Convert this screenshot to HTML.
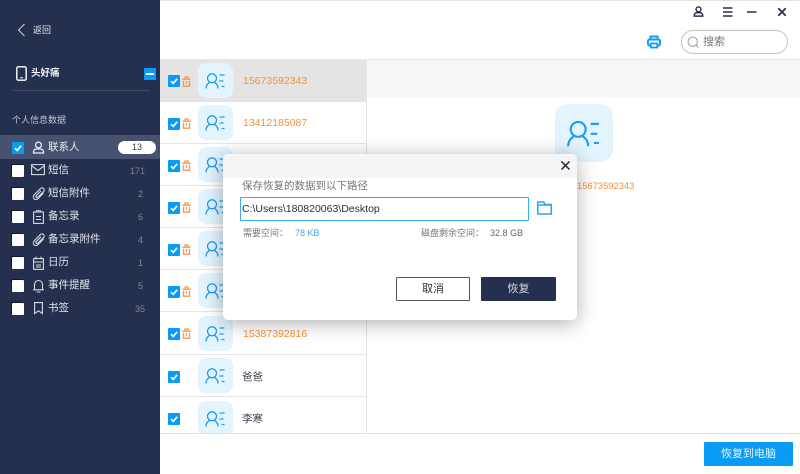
<!DOCTYPE html>
<html><head><meta charset="utf-8">
<style>
*{box-sizing:border-box}
html,body{margin:0;padding:0}
body{width:800px;height:474px;position:relative;overflow:hidden;background:#fff;font-family:"Liberation Sans","Noto Sans CJK SC",sans-serif}
.a{position:absolute}
.t{position:absolute;white-space:nowrap;line-height:14px}
#side{left:0;top:0;width:160px;height:474px;background:#25304e;color:#d8dce4}
.cb{position:absolute;width:12px;height:12px;background:#fff;border-radius:1px;box-shadow:-1px -1px 0 #10182c}
.ck{position:absolute;width:12px;height:12px;background:#0a9bf5;border-radius:1px}
.ck svg{display:block}
.row{position:absolute;left:160px;width:206px;height:42px;border-bottom:1px solid #e6e6e6;background:#fff}
.tile{position:absolute;left:38px;top:3px;width:35px;height:35px;background:#e3f4ff;border-radius:8px}
.num{position:absolute;left:83px;top:14px;font-size:10.5px;line-height:14px;color:#f0953a}
.nm{position:absolute;left:82px;top:15px;font-size:10.5px;line-height:14px;color:#3c4150}
.cnt{position:absolute;right:17px;font-size:9px;line-height:12px;color:#7d8598}
.lab{position:absolute;left:48px;font-size:10.5px;line-height:14px;color:#e2e5eb}
svg{position:absolute;overflow:visible}
</style></head>
<body>
<svg width="0" height="0" style="position:absolute"><defs>
<symbol id="p" viewBox="0 0 35 35"><g fill="none" stroke="#1b9df0" stroke-width="1.300"><circle cx="14" cy="15.300" r="4.500"/><path d="M8 25.500c0-3.500 1.800-5 3.500-6.200M20 25.500c0-3.500-1.800-5-3.500-6.200"/><path d="M21.500 12h5M21.500 18h4M23.500 23.500h3"/></g></symbol>
<symbol id="c" viewBox="0 0 12 12"><rect width="12" height="12" rx="1" fill="#0a9bf5"/><path d="M3 6.200l2.200 2.200L9.200 3.800" fill="none" stroke="#fff" stroke-width="1.700"/></symbol>
<symbol id="b" viewBox="0 0 9 11"><path d="M.3 3.200h8.400M3 3V1h3v2M1.500 4.800v5.400h6V4.800M4.500 5v2.800" fill="none" stroke="#f59a4a" stroke-width="1.300"/></symbol>
<symbol id="clip" viewBox="0 0 14 14"><path d="M11.500 6.500L6.500 11.800c-1.500 1.500-3.500 1.500-4.500.5S1 9.500 2.500 8L8.300 2.200c1-1 2.500-1 3.300-.2s.8 2.300-.2 3.300L6 10.500c-.6.600-1.400.6-1.800.2s-.4-1.200.2-1.800L9 4.300" fill="none" stroke="#d5d9e2" stroke-width="1.100"/></symbol>
</defs></svg>

<div class="a" style="left:160px;top:0;width:640px;height:1px;background:#e4e4e4"></div>
<div class="a" style="left:160px;top:59px;width:640px;height:1px;background:#e6e6e6"></div>

<!-- top bar -->
<svg style="left:693px;top:6px" width="11" height="11" viewBox="0 0 13 13"><g fill="none" stroke="#27314f" stroke-width="1.700"><circle cx="6.500" cy="4" r="2.900"/><path d="M1.500 12V11c0-1.800 1.500-3 2.500-3h5c1 0 2.500 1.200 2.500 3v1z"/></g></svg>
<svg style="left:723px;top:7px" width="10" height="10"><path d="M0 1h9.500M0 5h9.500M0 9h9.500" stroke="#27314f" stroke-width="1.500"/></svg>
<svg style="left:747px;top:11px" width="10" height="2"><path d="M0 1h9.500" stroke="#27314f" stroke-width="1.500"/></svg>
<svg style="left:778px;top:8px" width="8" height="8"><path d="M.3.300l7.400 7.400M7.700.300l-7.400 7.400" stroke="#27314f" stroke-width="1.800"/></svg>
<svg style="left:647px;top:35px" width="14" height="14" viewBox="0 0 14 14"><path d="M3.500 4.500V1.500h7v3" fill="none" stroke="#0f9ff8" stroke-width="2"/><rect x="1" y="4.500" width="12" height="6" rx="1.500" fill="#fff" stroke="#0f9ff8" stroke-width="2"/><rect x="3.700" y="8.500" width="6.600" height="4" fill="#fff" stroke="#0f9ff8" stroke-width="1.800"/></svg>
<div class="a" style="left:681px;top:30px;width:107px;height:24px;border:1px solid #c4c4c4;border-radius:12px;background:#fff"></div>
<svg style="left:687px;top:36px" width="13" height="13"><circle cx="5.700" cy="5.700" r="4.700" fill="none" stroke="#9a9a9a" stroke-width="1"/><path d="M9 9l2.500 2.500" stroke="#9a9a9a"/></svg>
<div class="t" style="left:703px;top:35px;font-size:11px;color:#777">搜索</div>

<!-- list rows -->
<div class="row" style="top:60px;background:#e4e4e4;border:0"><div class="tile"></div><svg style="left:38px;top:3px" width="35" height="35"><use href="#p"/></svg><svg style="left:8px;top:15px" width="12" height="12"><use href="#c"/></svg><svg style="left:22px;top:16px" width="9" height="11"><use href="#b"/></svg><div class="num">15673592343</div></div>
<div class="row" style="top:102px"><div class="tile"></div><svg style="left:38px;top:3px" width="35" height="35"><use href="#p"/></svg><svg style="left:8px;top:16px" width="12" height="12"><use href="#c"/></svg><svg style="left:22px;top:16px" width="9" height="11"><use href="#b"/></svg><div class="num">13412185087</div></div>
<div class="row" style="top:144px"><div class="tile"></div><svg style="left:38px;top:3px" width="35" height="35"><use href="#p"/></svg><svg style="left:8px;top:16px" width="12" height="12"><use href="#c"/></svg><svg style="left:22px;top:16px" width="9" height="11"><use href="#b"/></svg></div>
<div class="row" style="top:186px"><div class="tile"></div><svg style="left:38px;top:3px" width="35" height="35"><use href="#p"/></svg><svg style="left:8px;top:16px" width="12" height="12"><use href="#c"/></svg><svg style="left:22px;top:16px" width="9" height="11"><use href="#b"/></svg></div>
<div class="row" style="top:228px"><div class="tile"></div><svg style="left:38px;top:3px" width="35" height="35"><use href="#p"/></svg><svg style="left:8px;top:16px" width="12" height="12"><use href="#c"/></svg><svg style="left:22px;top:16px" width="9" height="11"><use href="#b"/></svg></div>
<div class="row" style="top:270px"><div class="tile"></div><svg style="left:38px;top:3px" width="35" height="35"><use href="#p"/></svg><svg style="left:8px;top:16px" width="12" height="12"><use href="#c"/></svg><svg style="left:22px;top:16px" width="9" height="11"><use href="#b"/></svg></div>
<div class="row" style="top:313px"><div class="tile"></div><svg style="left:38px;top:3px" width="35" height="35"><use href="#p"/></svg><svg style="left:8px;top:15px" width="12" height="12"><use href="#c"/></svg><svg style="left:22px;top:15px" width="9" height="11"><use href="#b"/></svg><div class="num">15387392816</div></div>
<div class="row" style="top:355px"><div class="tile"></div><svg style="left:38px;top:3px" width="35" height="35"><use href="#p"/></svg><svg style="left:8px;top:16px" width="12" height="12"><use href="#c"/></svg><div class="nm">爸爸</div></div>
<div class="row" style="top:397px;height:36px;overflow:hidden;border:0"><div class="tile" style="top:4px"></div><svg style="left:38px;top:4px" width="35" height="35"><use href="#p"/></svg><svg style="left:8px;top:16px" width="12" height="12"><use href="#c"/></svg><div class="nm">李寒</div></div>

<!-- right pane -->
<div class="a" style="left:366px;top:60px;width:1px;height:373px;background:#e6e6e6"></div>
<div class="a" style="left:367px;top:60px;width:433px;height:37px;background:#f7f7f7"></div>
<div class="a" style="left:555px;top:104px;width:58px;height:58px;background:#e3f4ff;border-radius:13px"></div>
<svg style="left:555px;top:104px" width="58" height="58" viewBox="0 0 35 35"><use href="#p"/></svg>
<div class="t" style="left:577px;top:179px;font-size:9.400px;color:#f0953a">15673592343</div>

<!-- bottom bar -->
<div class="a" style="left:160px;top:433px;width:640px;height:1px;background:#e2e2e2"></div>
<div class="a" style="left:704px;top:442px;width:89px;height:24px;background:#0a9bf5;border-radius:1px;color:#e6f5ff;font-size:11px;line-height:24px;text-align:center">恢复到电脑</div>

<!-- sidebar -->
<div id="side" class="a">
<svg style="left:17px;top:23px" width="9" height="14"><path d="M7.500 1L1.500 7l6 6" fill="none" stroke="#c8ccd6" stroke-width="1.100"/></svg>
<div class="t" style="left:33px;top:23px;font-size:9px;color:#e6e8ee">返回</div>
<svg style="left:16px;top:66px" width="11" height="15"><rect x=".8" y=".8" width="9.400" height="13.400" rx="1.500" fill="none" stroke="#fff" stroke-width="1.400"/><path d="M4 11.800h3" stroke="#fff"/></svg>
<div class="t" style="left:31px;top:67px;font-size:9.500px;font-weight:700;color:#f2f3f6">头好痛</div>
<div class="a" style="left:144px;top:68px;width:12px;height:12px;background:#0a9bf5"></div>
<div class="a" style="left:146px;top:73px;width:8px;height:2px;background:#fff"></div>
<div class="a" style="left:12px;top:90px;width:138px;height:1px;background:#3d4863"></div>
<div class="t" style="left:12px;top:113px;font-size:9px;color:#c0c4cf">个人信息数据</div>

<div class="a" style="left:0;top:135px;width:160px;height:24px;background:#46526f"></div>
<div class="ck" style="left:12px;top:142px"><svg width="12" height="12"><use href="#c"/></svg></div>
<svg style="left:32px;top:141px" width="13" height="13" viewBox="0 0 13 13"><g fill="none" stroke="#eef0f4" stroke-width="1.300"><circle cx="6.500" cy="4" r="2.900"/><path d="M1.500 12V11c0-1.800 1.500-3 2.500-3h5c1 0 2.500 1.200 2.500 3v1z"/></g></svg>
<div class="lab" style="top:140px;color:#eceef2">联系人</div>
<div class="a" style="left:118px;top:141px;width:38px;height:13px;background:#fff;border-radius:7px;color:#3c4150;font-size:9px;line-height:13px;text-align:center">13</div>

<div class="cb" style="left:12px;top:165px"></div>
<svg style="left:31px;top:164px" width="14" height="12"><rect x=".6" y=".6" width="12.800" height="10" fill="none" stroke="#d5d9e2" stroke-width="1.100"/><path d="M1 2l6 4.500L13 2" fill="none" stroke="#d5d9e2" stroke-width="1.100"/></svg>
<div class="lab" style="top:163px">短信</div><div class="cnt" style="top:165px;right:15px">171</div>

<div class="cb" style="left:12px;top:188px"></div>
<svg style="left:32px;top:186px" width="14" height="15" viewBox="0 0 14 14"><use href="#clip"/></svg>
<div class="lab" style="top:186px">短信附件</div><div class="cnt" style="top:188px">2</div>

<div class="cb" style="left:12px;top:211px"></div>
<svg style="left:33px;top:210px" width="11" height="14"><rect x=".6" y="2" width="9.800" height="11.400" fill="none" stroke="#d5d9e2" stroke-width="1.100"/><path d="M3.500 2.500V.8h4v1.700M3 6.500h5M3 9.500h5" fill="none" stroke="#d5d9e2"/></svg>
<div class="lab" style="top:209px">备忘录</div><div class="cnt" style="top:211px">6</div>

<div class="cb" style="left:12px;top:234px"></div>
<svg style="left:32px;top:232px" width="14" height="15" viewBox="0 0 14 14"><use href="#clip"/></svg>
<div class="lab" style="top:232px">备忘录附件</div><div class="cnt" style="top:234px">4</div>

<div class="cb" style="left:12px;top:257px"></div>
<svg style="left:33px;top:256px" width="11" height="14"><rect x=".6" y="2.500" width="9.800" height="10.900" fill="none" stroke="#d5d9e2" stroke-width="1.100"/><path d="M3 .5v3M8 .5v3M1 6h9M3 9h5M3 11h5" fill="none" stroke="#d5d9e2"/></svg>
<div class="lab" style="top:255px">日历</div><div class="cnt" style="top:257px">1</div>

<div class="cb" style="left:12px;top:280px"></div>
<svg style="left:32px;top:279px" width="13" height="14"><path d="M2.500 10.500V5.500a4 4 0 0 1 8 0v5M1 10.800h11M4.500 13h4" fill="none" stroke="#d5d9e2" stroke-width="1.100"/></svg>
<div class="lab" style="top:278px">事件提醒</div><div class="cnt" style="top:280px">5</div>

<div class="cb" style="left:12px;top:303px"></div>
<svg style="left:34px;top:302px" width="9" height="13"><path d="M.6.600h7.800v11L4.500 8.800.6 11.600z" fill="none" stroke="#d5d9e2" stroke-width="1.100"/></svg>
<div class="lab" style="top:301px">书签</div><div class="cnt" style="top:303px;right:15px">35</div>
</div>

<!-- dialog -->
<div class="a" style="left:223px;top:154px;width:354px;height:166px;background:#fff;border-radius:5px;box-shadow:0 3px 20px rgba(0,0,0,.32)"></div>
<div class="a" style="left:223px;top:154px;width:354px;height:24px;background:#f5f5f5;border-radius:5px 5px 0 0"></div>
<svg style="left:561px;top:161px" width="9" height="9"><path d="M.5.500l8 8M8.500.500l-8 8" stroke="#1d2433" stroke-width="1.500"/></svg>
<div class="t" style="left:242px;top:179px;font-size:10.500px;color:#777">保存恢复的数据到以下路径</div>
<div class="a" style="left:240px;top:197px;width:289px;height:24px;border:1px solid #37b0f0;border-radius:1px;background:#fff"></div>
<div class="t" style="left:242px;top:202px;font-size:10.500px;color:#2a2f3a">C:\Users\180820063\Desktop</div>
<svg style="left:537px;top:201px" width="15" height="14"><path d="M.7 13V1h6l1.300 2.500h6.300V13zM.7 4h13.600" fill="none" stroke="#2aa5ea" stroke-width="1.500"/></svg>
<div class="t" style="left:243px;top:226px;font-size:9px;color:#777">需要空间：</div>
<div class="t" style="left:295px;top:226px;font-size:9px;color:#37aef0">78 KB</div>
<div class="t" style="left:421px;top:226px;font-size:9px;color:#777">磁盘剩余空间：</div>
<div class="t" style="left:490px;top:226px;font-size:9px;color:#666">32.8 GB</div>
<div class="a" style="left:396px;top:277px;width:74px;height:24px;border:1px solid #555;border-radius:1px;background:#fff;color:#333;font-size:11px;line-height:22px;text-align:center">取消</div>
<div class="a" style="left:481px;top:277px;width:75px;height:24px;background:#25304e;border-radius:1px;color:#d5d8e0;font-size:11px;line-height:24px;text-align:center">恢复</div>
</body></html>
